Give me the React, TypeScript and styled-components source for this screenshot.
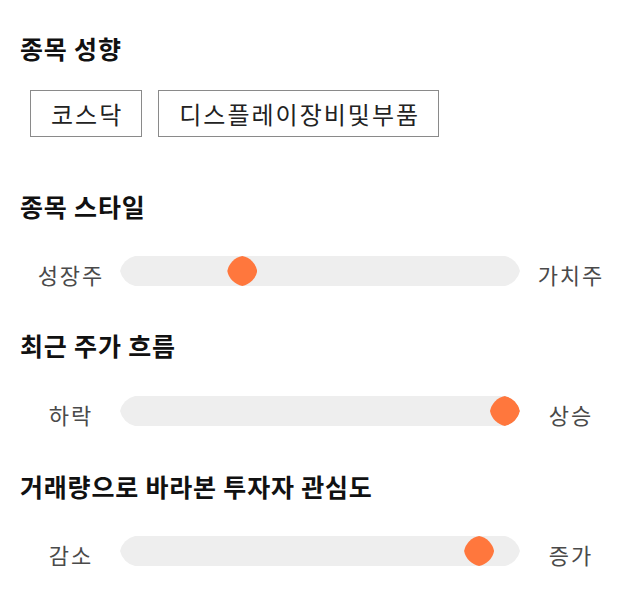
import React from "react";
import styled, { createGlobalStyle } from "styled-components";

const GlobalStyle = createGlobalStyle`
  html, body { margin: 0; padding: 0; background: #ffffff; }
  body { font-family: "Noto Sans CJK KR", "Noto Sans", sans-serif; }
`;

const Page = styled.div`
  width: 600px;
  padding: 32px 20px 20px 20px;
  display: flex;
  flex-direction: column;
`;

const Section = styled.section<{ $top: number; $gap: number }>`
  display: flex;
  flex-direction: column;
  margin-top: ${(p) => p.$top}px;
  gap: ${(p) => p.$gap}px;
`;

const Heading = styled.h2`
  margin: 0;
  font-size: 25px;
  line-height: 32px;
  height: 32px;
  font-weight: 700;
  letter-spacing: 0.8px;
  color: #111111;
  white-space: nowrap;
`;

const ChipRow = styled.div`
  display: flex;
  gap: 16px;
  padding-left: 10px;
`;

const Chip = styled.div`
  box-sizing: border-box;
  height: 47px;
  padding: 0 18px 0 20px;
  border: 1px solid #8a8a8a;
  display: flex;
  align-items: center;
  font-size: 24px;
  letter-spacing: 2px;
  color: #222222;
  white-space: nowrap;
`;

const SliderRow = styled.div`
  display: grid;
  grid-template-columns: 100px 400px 100px;
  align-items: start;
`;

const Label = styled.span`
  text-align: center;
  font-size: 22px;
  letter-spacing: 2px;
  text-indent: 2px;
  color: #4a4a4a;
  line-height: 30px;
  padding-top: 3px;
  white-space: nowrap;
`;

const Track = styled.div`
  position: relative;
  width: 400px;
  height: 30px;
  background: #eeeeee;
  clip-path: path("M15 0 H385 A20 20 0 0 1 400 15 A20 20 0 0 1 385 30 H15 A20 20 0 0 1 0 15 A20 20 0 0 1 15 0 Z");
`;

const Thumb = styled.div`
  position: absolute;
  top: 0;
  width: 30px;
  height: 30px;
  background: #ff773d;
  clip-path: path("M15 0 A19 19 0 0 1 30 15 A19 19 0 0 1 15 30 A19 19 0 0 1 0 15 A19 19 0 0 1 15 0 Z");
`;

type SliderProps = { left: string; right: string; value: number };

const Slider: React.FC<SliderProps> = ({ left, right, value }) => (
  <SliderRow>
    <Label>{left}</Label>
    <Track>
      <Thumb style={{ left: `calc(${value * 100}% - ${value * 30}px)` }} />
    </Track>
    <Label>{right}</Label>
  </SliderRow>
);

export default function App() {
  return (
    <>
      <GlobalStyle />
      <Page>
        <Section $top={0} $gap={26}>
          <Heading>종목 성향</Heading>
          <ChipRow>
            <Chip>코스닥</Chip>
            <Chip>디스플레이장비및부품</Chip>
          </ChipRow>
        </Section>
        <Section $top={53} $gap={34}>
          <Heading>종목 스타일</Heading>
          <Slider left="성장주" right="가치주" value={0.29} />
        </Section>
        <Section $top={40} $gap={35}>
          <Heading>최근 주가 흐름</Heading>
          <Slider left="하락" right="상승" value={1} />
        </Section>
        <Section $top={41} $gap={34}>
          <Heading>거래량으로 바라본 투자자 관심도</Heading>
          <Slider left="감소" right="증가" value={0.93} />
        </Section>
      </Page>
    </>
  );
}
